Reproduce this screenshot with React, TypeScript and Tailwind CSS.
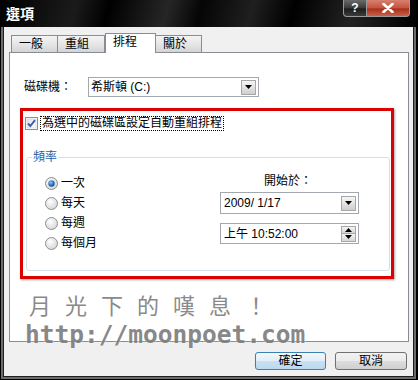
import React from 'react';

const font = "font-['Liberation_Sans','Noto_Sans_CJK_TC',sans-serif]";

function Tab({ label, active, className }: { label: string; active?: boolean; className: string }) {
  if (active) {
    return (
      <div className={`h-[20px] border border-b-0 border-[#898c95] bg-white pl-[7px] text-[12px] leading-[16px] text-black ${className}`}>
        {label}
      </div>
    );
  }
  return (
    <div
      className={`mb-px h-[17px] border border-b-0 border-[#898c95] bg-[linear-gradient(#f4f4f4,#e6e6e6_50%,#d4d4d4)] pl-[7px] pt-[1px] text-[12px] leading-[15px] text-black ${className}`}
    >
      {label}
    </div>
  );
}

function DropButton() {
  return (
    <div className="flex h-[15px] w-[15px] items-center justify-center border border-[#a7a7a7] bg-[linear-gradient(#f5f5f5,#e3e3e3_50%,#cdcdcd)]">
      <svg width="7" height="4" viewBox="0 0 7 4">
        <path d="M0 0h7L3.5 4z" fill="#000" />
      </svg>
    </div>
  );
}

function Radio({ label, checked }: { label: string; checked?: boolean }) {
  return (
    <div className="flex h-[20px] items-center gap-[3px]">
      <svg width="13" height="13" viewBox="0 0 13 13">
        <defs>
          <radialGradient id="rb" cx="0.4" cy="0.35" r="0.7">
            <stop offset="0" stopColor="#ffffff" />
            <stop offset="1" stopColor="#d4d4d4" />
          </radialGradient>
          <radialGradient id="rd" cx="0.4" cy="0.35" r="0.7">
            <stop offset="0" stopColor="#8cc8f4" />
            <stop offset="0.6" stopColor="#2a72c4" />
            <stop offset="1" stopColor="#0e3f86" />
          </radialGradient>
        </defs>
        <circle cx="6.5" cy="6.5" r="6" fill="url(#rb)" stroke="#8e8f8f" />
        {checked && <circle cx="6.5" cy="6.5" r="3.2" fill="url(#rd)" />}
      </svg>
      <span className="text-[12px] leading-[14px] text-black">{label}</span>
    </div>
  );
}

export default function App() {
  return (
    <div className={`relative h-[380px] w-[418px] overflow-hidden bg-black pb-px pl-px pr-[2px] ${font}`}>
      <div className="flex h-full flex-col border-x-2 border-b-2 border-[#6b6b6b]">
        {/* Title bar */}
        <div className="relative -mx-[2px] flex h-[27px] shrink-0 items-center bg-[linear-gradient(105deg,#000_0%,#1b1b1b_18%,#000_26%,#262626_40%,#050505_48%,#1f1f1f_60%,#000_70%,#222_84%,#000_100%)] pl-[5px]">
          <span className="text-[14px] font-bold leading-[16px] text-white">選項</span>
          <div className="absolute right-[6px] top-0 flex h-[17px]">
            <div className="flex w-[24px] items-center justify-center rounded-bl-[4px] border border-t-0 border-[#9a9a9a] bg-[linear-gradient(#6a6a6a,#3a3a3a_50%,#1c1c1c_55%,#3c3c3c)] text-[12px] font-bold leading-none text-white">
              ?
            </div>
            <div className="flex w-[43px] items-center justify-center rounded-br-[4px] border border-l-0 border-t-0 border-[#9a9a9a] bg-[linear-gradient(#d8806e,#c2543e_50%,#a8301b_55%,#c9604a)]">
              <svg width="12" height="10" viewBox="0 0 12 10">
                <path d="M1.5 1l9 8M10.5 1l-9 8" stroke="#fff" strokeWidth="2.6" strokeLinecap="round" />
              </svg>
            </div>
          </div>
        </div>

        {/* Client */}
        <div className="flex flex-1 flex-col border-x border-b border-[#1e1e1e] bg-[#f0f0f0] pl-[5px] pr-[4px] pt-[6px]">
          <div className="relative z-10 -mb-px ml-[2px] flex h-[20px] items-end">
            <Tab label="一般" className="w-[47px]" />
            <Tab label="重組" className="w-[47px] border-l-0" />
            <Tab label="排程" active className="w-[51px]" />
            <Tab label="關於" className="w-[46px] border-l-0" />
          </div>

          <div className="h-[290px] border border-[#898c95] bg-white">
            {/* Drive row */}
            <div className="mt-[24px] flex h-[20px] items-center pl-[14px]">
              <span className="w-[64px] text-[12px] leading-[14px] text-black">磁碟機：</span>
              <div className="flex h-[20px] w-[171px] items-center justify-between border border-[#a3a8b0] bg-white pl-[2px] pr-[2px]">
                <span className="text-[12px] leading-[14px] text-black">希斯頓 (C:)</span>
                <DropButton />
              </div>
            </div>

            {/* Red highlight */}
            <div className="ml-[10px] mt-[11px] h-[171px] w-[374px] border-[3px] border-[#dd0000] shadow-[1px_1px_2px_rgba(0,0,0,0.35)]">
              <div className="ml-[2px] mt-[6px] flex h-[13px] items-center gap-[2px]">
                <svg width="13" height="13" viewBox="0 0 13 13">
                  <defs>
                    <linearGradient id="cb" x1="0" y1="0" x2="1" y2="1">
                      <stop offset="0" stopColor="#e4e4e4" />
                      <stop offset="1" stopColor="#ffffff" />
                    </linearGradient>
                  </defs>
                  <rect x="0.5" y="0.5" width="12" height="12" fill="#fff" stroke="#8e8f8f" />
                  <rect x="2" y="2" width="9" height="9" fill="url(#cb)" stroke="#c7d0db" strokeWidth="0.6" />
                  <path d="M3 6.5l2.3 2.5L10 3.2" fill="none" stroke="#3a5fa8" strokeWidth="1.9" />
                </svg>
                <span className="border border-dotted border-black px-px text-[12px] leading-[13px] text-black">
                  為選中的磁碟區設定自動重組排程
                </span>
              </div>

              {/* Frequency group */}
              <div className="relative ml-[3px] mr-px mt-[27px] flex h-[114px] justify-between rounded-[3px] border border-[#d5dfe5] pl-[18px] pr-[30px] pt-[15px]">
                <span className="absolute -top-[8px] left-[5px] bg-white px-[1px] text-[12px] leading-[14px] text-[#1f5ea8]">
                  頻率
                </span>
                <div className="flex flex-col">
                  <Radio label="一次" checked />
                  <Radio label="每天" />
                  <Radio label="每週" />
                  <Radio label="每個月" />
                </div>
                <div className="flex w-[139px] flex-col">
                  <div className="flex h-[16px] items-center justify-center pr-[3px] text-[12px] leading-[14px] text-black">
                    開始於：
                  </div>
                  <div className="mt-[3px] flex h-[22px] items-center justify-between border border-[#a3a8b0] bg-white pl-[3px] pr-[2px]">
                    <span className="text-[12px] leading-[14px] text-black">2009/ 1/17</span>
                    <DropButton />
                  </div>
                  <div className="mt-[9px] flex h-[21px] items-center justify-between border border-[#a3a8b0] bg-white pl-[3px] pr-[2px]">
                    <span className="text-[12px] leading-[14px] text-black">上午 10:52:00</span>
                    <div className="flex flex-col">
                      <div className="flex h-[8px] w-[15px] items-center justify-center border border-[#a7a7a7] bg-[linear-gradient(#f5f5f5,#d6d6d6)]">
                        <svg width="7" height="4" viewBox="0 0 7 4">
                          <path d="M0 4h7L3.5 0z" fill="#000" />
                        </svg>
                      </div>
                      <div className="flex h-[8px] w-[15px] items-center justify-center border border-t-0 border-[#a7a7a7] bg-[linear-gradient(#f5f5f5,#d6d6d6)]">
                        <svg width="7" height="4" viewBox="0 0 7 4">
                          <path d="M0 0h7L3.5 4z" fill="#000" />
                        </svg>
                      </div>
                    </div>
                  </div>
                </div>
              </div>
            </div>
          </div>

          {/* Buttons */}
          <div className="mr-[2px] mt-[10px] flex justify-end gap-[9px]">
            <button className="h-[18px] w-[71px] rounded-[3px] border border-[#3c7fb1] bg-[linear-gradient(#f2f8fc,#e1eef8_50%,#c8e0f2_51%,#bcd9ef)] text-[12px] leading-[14px] text-black">
              確定
            </button>
            <button className="h-[18px] w-[72px] rounded-[3px] border border-[#707070] bg-[linear-gradient(#f2f2f2,#ebebeb_50%,#dddddd_51%,#cfcfcf)] text-[12px] leading-[14px] text-black">
              取消
            </button>
          </div>
        </div>
      </div>

      {/* Watermark */}
      <div className="pointer-events-none absolute left-[29px] top-[293px] font-['Noto_Sans_CJK_TC',sans-serif] text-[22px] leading-none tracking-[14px] text-[#8a8a8a] [text-shadow:0_0_2px_#fff]">
        月光下的嘆息！
      </div>
      <div className="pointer-events-none absolute left-[25px] top-[323px] font-['DejaVu_Sans_Mono',monospace] text-[24.5px] font-bold leading-none text-[#7c7c7c] opacity-90 [text-shadow:0_0_2px_#fff]">
        http://moonpoet.com
      </div>
    </div>
  );
}
